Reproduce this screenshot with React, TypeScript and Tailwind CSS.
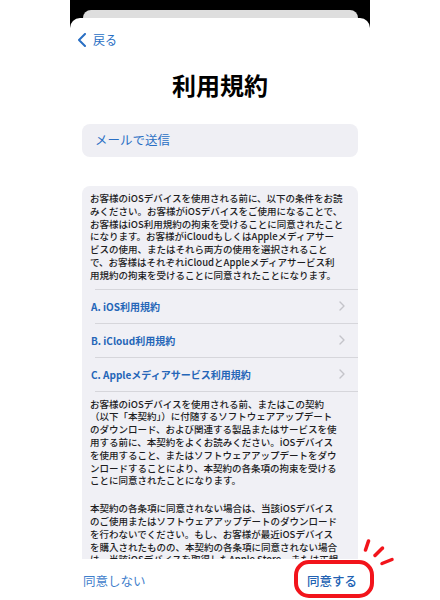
import React from "react";

const FONT = { fontFamily: '"Noto Sans CJK JP", "Noto Sans", sans-serif' };

const para1 = [
  "お客様のiOSデバイスを使用される前に、以下の条件をお読",
  "みください。お客様がiOSデバイスをご使用になることで、",
  "お客様はiOS利用規約の拘束を受けることに同意されたこと",
  "になります。お客様がiCloudもしくはAppleメディアサー",
  "ビスの使用、またはそれら両方の使用を選択されること",
  "で、お客様はそれぞれiCloudとAppleメディアサービス利",
  "用規約の拘束を受けることに同意されたことになります。",
];

const para2 = [
  "お客様のiOSデバイスを使用される前、またはこの契約",
  "（以下「本契約」）に付随するソフトウェアアップデート",
  "のダウンロード、および関連する製品またはサービスを使",
  "用する前に、本契約をよくお読みください。iOSデバイス",
  "を使用すること、またはソフトウェアアップデートをダウ",
  "ンロードすることにより、本契約の各条項の拘束を受ける",
  "ことに同意されたことになります。",
];

const para3 = [
  "本契約の各条項に同意されない場合は、当該iOSデバイス",
  "のご使用またはソフトウェアアップデートのダウンロード",
  "を行わないでください。もし、お客様が最近iOSデバイス",
  "を購入されたものの、本契約の各条項に同意されない場合",
  "は、当該iOSデバイスを取得したApple Store、または正規",
];

function Para({ lines, className = "" }: { lines: string[]; className?: string }) {
  return (
    <div className={`text-[9.5px] leading-[12.8px] font-medium text-[#1d1d1f] ${className}`}>
      {lines.map((l, i) => (
        <div key={i} className="whitespace-nowrap">
          {l}
        </div>
      ))}
    </div>
  );
}

function Sep() {
  return <div className="ml-[13px] h-px bg-[#d6d6db]" />;
}

function Row({ label }: { label: string }) {
  return (
    <div className="h-[33px] flex items-center justify-between pl-[9px] pr-[13px]">
      <span className="text-[10px] font-semibold text-[#2566b8] whitespace-nowrap">{label}</span>
      <svg width="6" height="10" viewBox="0 0 6 10" fill="none">
        <path d="M1 1 L5 5 L1 9" stroke="#c4c4c9" strokeWidth="1.4" strokeLinecap="round" strokeLinejoin="round" />
      </svg>
    </div>
  );
}

export default function App() {
  return (
    <div className="relative w-[440px] h-[600px] bg-white flex overflow-hidden" style={FONT}>
      <div className="w-[70px] shrink-0" />
      <div className="w-[300px] h-[600px] shrink-0 bg-black flex flex-col overflow-hidden">
        <div className="shrink-0 mt-[10px] ml-[13px] mr-[12px] h-[8px] rounded-t-[8px] bg-[#dedede]" />
        <div className="shrink-0 h-[582px] bg-white rounded-t-[10px] flex flex-col overflow-hidden">
          {/* back */}
          <div className="shrink-0 h-[44px] flex items-center pl-[7px]">
            <svg width="10" height="14" viewBox="0 0 10 14" fill="none">
              <path d="M8 1 L2 7 L8 13" stroke="#2a6fc4" strokeWidth="2" strokeLinecap="round" strokeLinejoin="round" />
            </svg>
            <span className="ml-[6px] text-[12px] text-[#2a6fc4]">戻る</span>
          </div>
          {/* title */}
          <div className="shrink-0 mt-[7px] h-[32px] leading-[32px] text-center text-[24px] font-bold text-black">
            利用規約
          </div>
          {/* mail */}
          <div className="shrink-0 mt-[23px] mx-[12px] h-[33px] rounded-[8px] bg-[#efeff4] flex items-center pl-[13px]">
            <span className="text-[12.5px] text-[#2a6fc4]">メールで送信</span>
          </div>
          {/* terms */}
          <div className="shrink-0 mt-[29px] mx-[12px] h-[373px] rounded-t-[8px] bg-[#f0f0f5] overflow-hidden pt-[6px]">
            <Para lines={para1} className="pl-[8px]" />
            <div className="mt-[7px]" />
            <Sep />
            <Row label="A. iOS利用規約" />
            <Sep />
            <Row label="B. iCloud利用規約" />
            <Sep />
            <Row label="C. Appleメディアサービス利用規約" />
            <Sep />
            <Para lines={para2} className="pl-[8px] mt-[6px]" />
            <Para lines={para3} className="pl-[8px] mt-[15px]" />
          </div>
          {/* footer */}
          <div className="shrink-0 h-[44px] flex items-center justify-between px-[13px]">
            <span className="text-[12.5px] text-[#3f80cc]">同意しない</span>
            <span className="text-[12.5px] font-medium text-[#2262b3]">同意する</span>
          </div>
        </div>
      </div>
      <div className="flex-1" />
      <svg className="absolute left-0 top-0 pointer-events-none" width="440" height="600" viewBox="0 0 440 600">
        <rect x="296" y="562" width="76" height="34" rx="13" fill="none" stroke="#f2141b" strokeWidth="4" />
        <g stroke="#f2141b" strokeWidth="3.5" strokeLinecap="round">
          <line x1="368.5" y1="541" x2="365.5" y2="550" />
          <line x1="382.5" y1="548" x2="375" y2="555.5" />
          <line x1="392" y1="559.5" x2="382" y2="563.5" />
        </g>
      </svg>
    </div>
  );
}
